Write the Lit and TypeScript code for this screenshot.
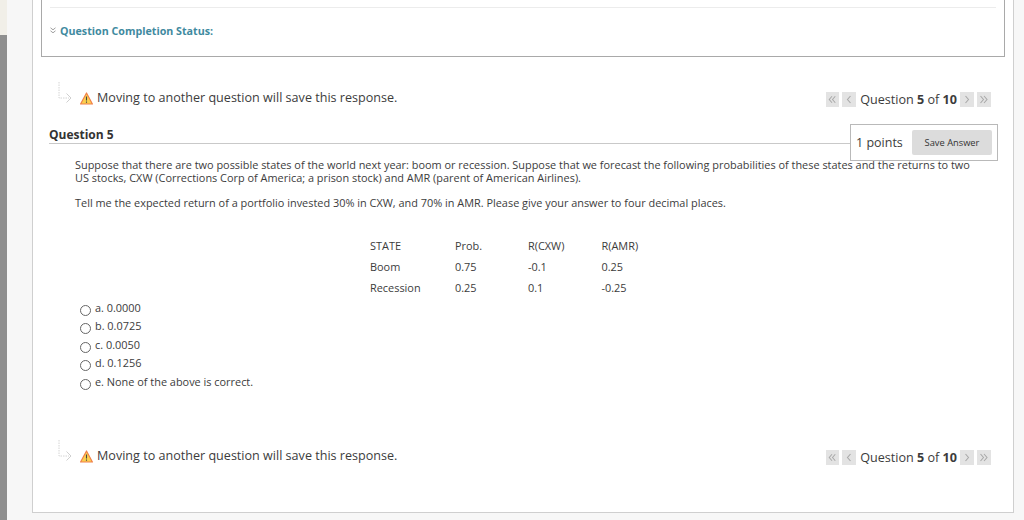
import { LitElement, html, css } from 'lit';
import { customElement } from 'lit/decorators.js';

const rows = [
  ['STATE', 'Prob.', 'R(CXW)', 'R(AMR)'],
  ['Boom', '0.75', '-0.1', '0.25'],
  ['Recession', '0.25', '0.1', '-0.25'],
];

const answers = ['a. 0.0000', 'b. 0.0725', 'c. 0.0050', 'd. 0.1256', 'e. None of the above is correct.'];

const chevron = (d: string) => html`<svg width="14" height="15" viewBox="0 0 14 15">
  <path d=${d} fill="none" stroke="#a9a9a9" stroke-width="1.1"></path>
</svg>`;

@customElement('app-root')
export class AppRoot extends LitElement {
  static styles = css`
    :host {
      display: block;
      width: 1024px;
      height: 520px;
      overflow: hidden;
      font-family: 'Open Sans', 'Liberation Sans', sans-serif;
      color: #333;
      background: #f7f7f7;
    }
    .page {
      display: flex;
      height: 520px;
    }
    .strip {
      width: 7px;
      flex: none;
      display: flex;
      flex-direction: column;
      background: #8f8f8f;
    }
    .strip .cap {
      height: 35px;
      background: #f1efe8;
    }
    .panel {
      box-sizing: border-box;
      width: 982px;
      height: 513px;
      margin-left: 25px;
      padding: 0 8px;
      background: #fff;
      border: 1px solid #cfcfcf;
      border-top: none;
    }
    .status {
      box-sizing: border-box;
      height: 57px;
      padding: 7px 8px 0;
      border: 1px solid #a9a9a9;
      border-top: none;
    }
    .status .rule {
      height: 1px;
      background: #ececec;
    }
    .status .label {
      display: flex;
      align-items: center;
      gap: 4px;
      margin-top: 16px;
      height: 13px;
      font-size: 10.7px;
      font-weight: 700;
      color: #3f8a9f;
    }
    .spacer {
      height: 27px;
    }
    .nav {
      display: flex;
      justify-content: space-between;
      align-items: center;
      height: 30px;
      padding: 0 14px 0 17px;
    }
    .warn {
      display: flex;
      align-items: center;
      margin-bottom: 2px;
      font-size: 12.58px;
      line-height: 18px;
      color: #3c3c3c;
    }
    .warn .arrow {
      margin: 0 8px 11px 0;
    }
    .warn .tri {
      margin-right: 4px;
    }
    .pager {
      display: flex;
      align-items: center;
      font-size: 12.6px;
      color: #3c3c3c;
    }
    .pager .btn {
      display: flex;
      width: 14px;
      height: 15px;
      margin-right: 3px;
      background: #e3e3e3;
    }
    .pager .btn:first-child {
      width: 13px;
    }
    .pager .btn:last-child {
      margin-right: 0;
    }
    .pager .count {
      margin: 0 3px 0 1px;
    }
    .question {
      position: relative;
      margin-left: 8px;
    }
    .question h3 {
      width: 801px;
      height: 16px;
      margin: 13px 0 0;
      font-size: 12px;
      line-height: 16px;
      font-weight: 700;
      color: #333;
      border-bottom: 1px solid #c9c9c9;
    }
    .points {
      position: absolute;
      top: -3px;
      left: 801px;
      box-sizing: border-box;
      width: 148px;
      height: 37px;
      display: flex;
      align-items: center;
      justify-content: space-between;
      padding: 0 5px;
      background: #fff;
      border: 1px solid #b9b9b9;
      font-size: 12.5px;
      color: #3c3c3c;
    }
    .points .save {
      width: 80px;
      height: 25px;
      display: flex;
      align-items: center;
      justify-content: center;
      background: #dcdcdc;
      border-radius: 2px;
      font-size: 9.3px;
      color: #333;
    }
    .body {
      padding: 15px 26px 0 34px;
      font-size: 10.92px;
      line-height: 12.5px;
      color: #3c3c3c;
    }
    .body p {
      margin: 0 0 13px;
    }
    .grid {
      display: grid;
      grid-template-columns: 85px 73px 73.5px auto;
      justify-content: start;
      row-gap: 8px;
      margin: 29px 0 0 295px;
      line-height: 13px;
    }
    .answers {
      margin: 4.600px 0 0 39px;
      font-size: 10.92px;
      color: #3c3c3c;
    }
    .answer {
      display: flex;
      align-items: center;
      height: 18.5px;
      gap: 4px;
    }
    .radio {
      box-sizing: border-box;
      width: 11px;
      height: 11px;
      margin-top: 6px;
      border: 1px solid #666;
      border-radius: 50%;
    }
    .foot {
      margin-top: 51.900px;
    }
  `;

  private arrowIcon() {
    return html`<svg class="arrow" width="14" height="21" viewBox="0 0 14 21">
      <path d="M1 0v16h10" fill="none" stroke="#d4d4d4" stroke-dasharray="1.5 1"></path>
      <path d="M8.500 11.500l4.500 4.500-4.500 4.500" fill="none" stroke="#cfcfcf"></path>
    </svg>`;
  }

  private warnIcon() {
    return html`<svg class="tri" width="13" height="13" viewBox="0 0 13 13">
      <path d="M6.5 1L12.400 12H.6z" fill="#fbd04e" stroke="#f0804a" stroke-width="1.2" stroke-linejoin="round"></path>
      <path d="M6.5 4.400v4M6.5 9.400v1.300" stroke="#444" stroke-width="1.1"></path>
    </svg>`;
  }

  private navRow() {
    return html`<div class="nav">
      <div class="warn">${this.arrowIcon()}${this.warnIcon()}Moving to another question will save this response.</div>
      <div class="pager">
        <span class="btn">${chevron('M6.500 4l-3 3.500 3 3.500M10 4l-3 3.500 3 3.500')}</span>
        <span class="btn">${chevron('M8.500 4l-3 3.500 3 3.500')}</span>
        <span class="count">Question <b>5</b> of <b>10</b></span>
        <span class="btn">${chevron('M5.500 4l3 3.500-3 3.500')}</span>
        <span class="btn">${chevron('M3.500 4l3 3.500-3 3.500M7 4l3 3.500-3 3.500')}</span>
      </div>
    </div>`;
  }

  render() {
    return html`<div class="page">
      <div class="strip"><div class="cap"></div></div>
      <div class="panel">
        <div class="status">
          <div class="rule"></div>
          <div class="label">
            <svg width="6" height="7" viewBox="0 0 6 7">
              <path d="M.5 .8l2.500 2 2.500-2M.5 3.800l2.500 2 2.500-2" fill="none" stroke="#a0a0a0" stroke-width="1"></path>
            </svg>
            Question Completion Status:
          </div>
        </div>
        <div class="spacer"></div>
        ${this.navRow()}
        <div class="question">
          <h3>Question 5</h3>
          <div class="points"><span>1 points</span><span class="save">Save Answer</span></div>
        </div>
        <div class="body">
          <p>Suppose that there are two possible states of the world next year: boom or recession. Suppose that we forecast the following probabilities of these states and the returns to two US stocks, CXW (Corrections Corp of America; a prison stock) and AMR (parent of American Airlines).</p>
          <p>Tell me the expected return of a portfolio invested 30% in CXW, and 70% in AMR. Please give your answer to four decimal places.</p>
          <div class="grid">${rows.flat().map((c) => html`<span>${c}</span>`)}</div>
        </div>
        <div class="answers">
          ${answers.map((a) => html`<div class="answer"><span class="radio"></span>${a}</div>`)}
        </div>
        <div class="foot">${this.navRow()}</div>
      </div>
    </div>`;
  }
}
